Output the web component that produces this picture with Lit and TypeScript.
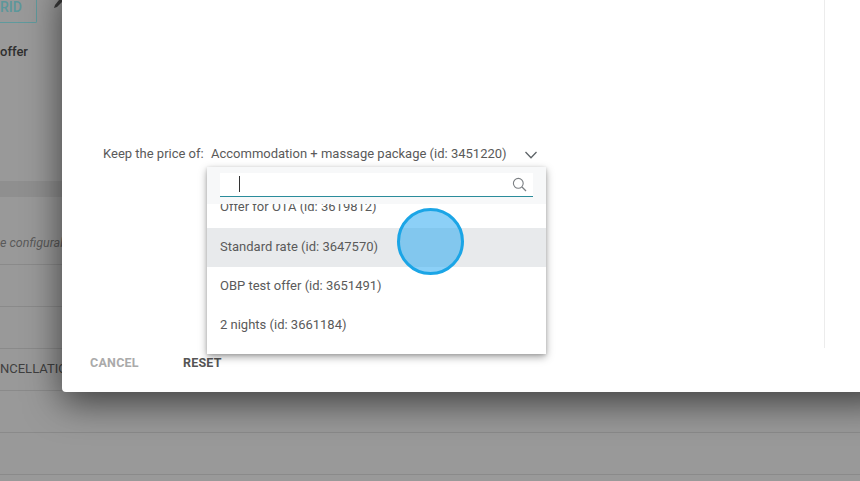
import { LitElement, html, css } from "lit";
import { customElement } from "lit/decorators.js";

@customElement("app-root")
export class AppRoot extends LitElement {
  static styles = css`
    :host {
      display: block;
      width: 860px;
      height: 481px;
      position: relative;
      overflow: hidden;
      background: #999;
      font-family: Roboto, "Liberation Sans", sans-serif;
      color: #545454;
    }
    .page { display: flex; flex-direction: column; height: 481px; width: 860px; overflow: hidden; }
    .grid-btn {
      box-sizing: border-box;
      width: 37px; height: 23px; flex: none;
      border: 1px solid #5f9a9d; border-top: none; border-left: none;
      border-radius: 0 0 2px 0;
      font-size: 14px; font-weight: 500; color: #5c979b; line-height: 14px;
      text-align: right; padding-right: 15px; white-space: nowrap;
    }
    .offer { margin-top: 21px; height: 16px; font-size: 13px; font-weight: 500; color: #2f2f2f; line-height: 16px; white-space: nowrap; }
    .spacer { height: 121px; flex: none; }
    .band { height: 16px; background: #8f8f8f; flex: none; }
    .row {
      height: 42px; box-sizing: border-box; flex: none;
      border-bottom: 1px solid #8a8a8a;
      display: flex; align-items: center; white-space: nowrap; overflow: hidden;
    }
    .first { height: 68px; padding-top: 24px; }
    .note { font-size: 12.5px; font-style: italic; color: #5a5a5a; }
    .cancel-label { font-size: 13px; color: #3f3f3f; margin-top: -2px; }
    .pencil { position: absolute; left: 54px; top: 0; width: 8px; height: 8px; }
    .modal {
      position: absolute; left: 62px; top: -20px; width: 830px; height: 412px;
      box-sizing: border-box;
      background: #fff; border-radius: 0 0 4px 4px;
      box-shadow: 0 10px 36px rgba(0,0,0,.6);
      display: flex; flex-direction: column;
    }
    .body { flex: 1; display: flex; min-height: 0; }
    .main { width: 763px; flex: none; box-sizing: border-box; padding: 164px 0 0 41px; border-right: 1px solid #ececec; height: 368px; }
    .field { display: flex; align-items: flex-start; font-size: 13px; line-height: 20px; }
    .label { width: 104px; flex: none; color: #5a5a5a; height: 20px; }
    .select {
      box-sizing: border-box; width: 339px; height: 25px; padding-left: 4px;
      border-bottom: 1px solid #2b8c9b; display: flex; justify-content: space-between;
      color: #5a5a5a; white-space: nowrap; position: relative;
    }
    .chev { width: 14px; height: 8px; margin: 7px 8px 0 0; }
    .actions { display: flex; height: 44px; align-items: flex-start; padding: 7px 0 0 28px; gap: 44px; box-sizing: border-box;
      font-size: 12.5px; font-weight: 700; letter-spacing: 0.25px; line-height: 16px; }
    .actions span:first-child { color: #aaa; }
    .actions span:last-child { color: #555; }
    .panel {
      position: absolute; left: 207px; top: 167px; width: 339px; height: 187px;
      background: #fff; box-shadow: 0 3px 8px rgba(0,0,0,.35), 0 1px 3px rgba(0,0,0,.15);
      overflow: hidden; display: flex; flex-direction: column;
    }
    .search-wrap { position: relative; z-index: 1; height: 37px; flex: none; box-sizing: border-box; background: #f7f8f9; padding: 6px 13px 0; }
    .search { height: 24px; box-sizing: border-box; background: #fff; border-bottom: 1px solid #2b8c9b; position: relative; display: flex; justify-content: space-between; padding-left: 19px; }
    .caret { width: 1px; height: 16px; margin-top: 3px; background: #333; }
    .mag { width: 15px; height: 15px; margin: 4px 6px 0 0; }
    .list { margin-top: -18px; font-size: 13px; color: #5a5a5a; }
    .opt { height: 39px; line-height: 37px; padding-left: 13px; white-space: nowrap; }
    .opt.first-opt { height: 42px; line-height: 42px; }
    .opt.on { background: #e8eaec; }
    .tap {
      position: absolute; left: 397px; top: 208px; width: 67px; height: 67px; box-sizing: border-box;
      border-radius: 50%; border: 3px solid #1ba5e6; background: rgba(45,170,240,.55);
    }
  `;

  render() {
    return html`
      <div class="page">
        <div class="grid-btn">RID</div>
        <div class="offer">offer</div>
        <div class="spacer"></div>
        <div class="band"></div>
        <div class="row first"><span class="note">e configurable</span></div>
        <div class="row"></div>
        <div class="row"></div>
        <div class="row"><span class="cancel-label">NCELLATION</span></div>
        <div class="row"></div>
        <div class="row"></div>
      </div>
      <svg class="pencil" viewBox="0 0 8 8"><path d="M0 8 L1 5 L5 0 L8 0 L8 2 L3 7 Z" fill="#3a3a3a"/></svg>
      <div class="modal">
        <div class="body">
          <div class="main">
            <div class="field">
              <span class="label">Keep the price of:</span>
              <div class="select">
                <span>Accommodation + massage package (id: 3451220)</span>
                <svg class="chev" viewBox="0 0 14 8"><path d="M1.5 1 L7 6.8 L12.5 1" fill="none" stroke="#5e6468" stroke-width="1.3"/></svg>
              </div>
            </div>
          </div>
        </div>
        <div class="actions"><span>CANCEL</span><span>RESET</span></div>
      </div>
      <div class="panel">
        <div class="search-wrap">
          <div class="search">
            <div class="caret"></div>
            <svg class="mag" viewBox="0 0 15 15"><circle cx="6.3" cy="6.3" r="4.9" fill="none" stroke="#7b7f83" stroke-width="1.1"/><path d="M10 10 L14 14" stroke="#7b7f83" stroke-width="1.2"/></svg>
          </div>
        </div>
        <div class="list">
          <div class="opt first-opt">Offer for OTA (id: 3619812)</div>
          <div class="opt on">Standard rate (id: 3647570)</div>
          <div class="opt">OBP test offer (id: 3651491)</div>
          <div class="opt">2 nights (id: 3661184)</div>
        </div>
      </div>
      <div class="tap"></div>
    `;
  }
}
